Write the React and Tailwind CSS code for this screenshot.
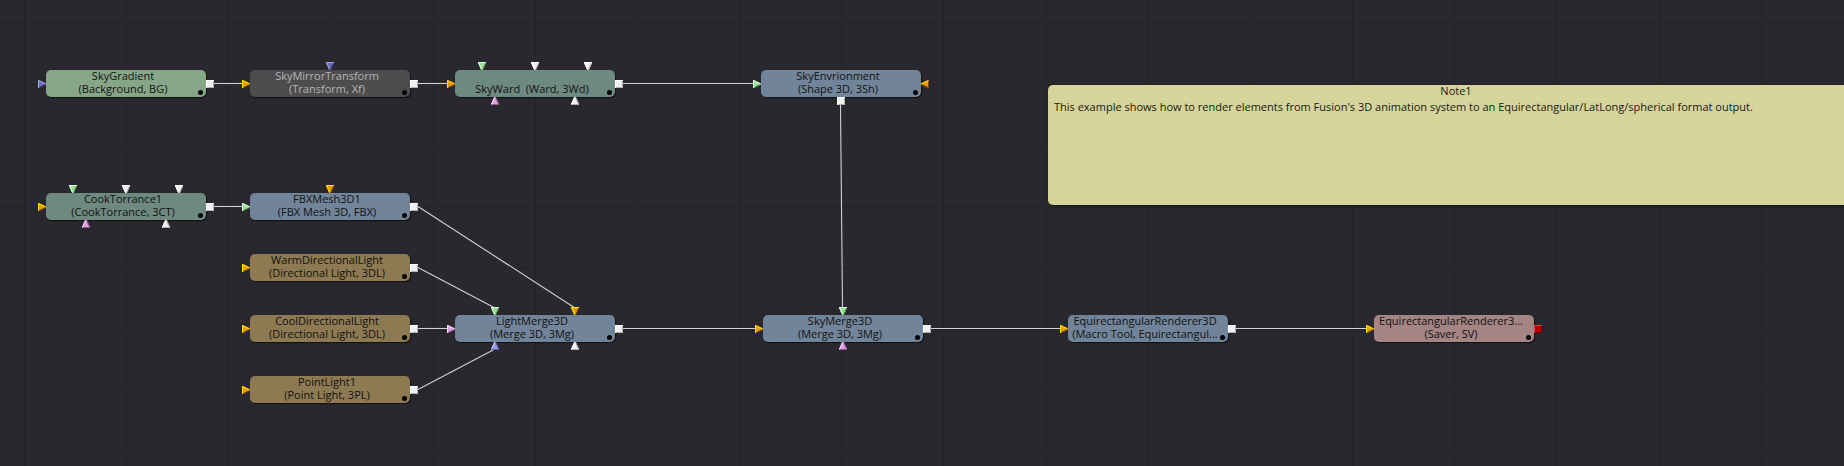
const PALETTE = {
  blue: ['#a3a3ec', '#6c6cb4', '#30307c'],
  amber: ['#ffe000', '#e6a000', '#7a4600'],
  green: ['#e0ffe0', '#98e098', '#4a8a4a'],
  white: ['#ffffff', '#f0f0f0', '#b0b0b0'],
  pink: ['#ffd8ff', '#e0a0e0', '#905890'],
  lilac: ['#c8c8ff', '#9c9ce0', '#5c5ca8'],
  red: ['#e84040', '#c00000', '#700000'],
};

const SHAPES = {
  right: { fill: '0,0 1,0 8,3.5 8,4.5 1,8 0,8', light: 'M0.5 8V0.5L7.5 3.8', dark: 'M1 7.6L8 4.3' },
  left: { fill: '8,0 7,0 0,3.5 0,4.5 7,8 8,8', light: 'M0 3.8L7.5 0.5', dark: 'M0.5 4.3L7.5 7.5V0.5' },
  down: { fill: '0,0 8,0 8,1 4.8,8 3.2,8 0,1', light: 'M0 0.5H8M0.5 0.5L3.5 7.5', dark: 'M7.6 1L4.5 8' },
  up: { fill: '3.2,0 4.8,0 8,7 8,8 0,8 0,7', light: 'M3.5 0.3L0.5 7.5', dark: 'M4.6 0.5L7.6 7.5H0' },
  square: { fill: '0,0 8,0 8,8 0,8', light: 'M0.5 8V0.5H8', dark: 'M0 7.5H7.5V0' },
};

const NODES = [
  { x: 46, y: 70, bg: 'bg-[#87a687]', name: 'SkyGradient', type: '(Background, BG)', ports: [[-8, 10, 'right', 'blue'], [160, 10, 'square', 'white']] },
  { x: 250, y: 70, bg: 'bg-[#4d4d4d]', text: 'text-[#b4b4b4]', name: 'SkyMirrorTransform', type: '(Transform, Xf)', ports: [[-8, 10, 'right', 'amber'], [76, -8, 'down', 'blue'], [160, 10, 'square', 'white']] },
  { x: 455, y: 70, bg: 'bg-[#6e8980]', name: '\u00a0', type: 'SkyWard  (Ward, 3Wd)', ports: [[-8, 10, 'right', 'amber'], [23, -8, 'down', 'green'], [76, -8, 'down', 'white'], [129, -8, 'down', 'white'], [36, 27, 'up', 'pink'], [116, 27, 'up', 'white'], [160, 10, 'square', 'white']] },
  { x: 761, y: 70, bg: 'bg-[#718499]', name: 'SkyEnvrionment', type: '(Shape 3D, 3Sh)', ports: [[-8, 10, 'right', 'green'], [160, 10, 'left', 'amber'], [76, 27, 'square', 'white']] },
  { x: 46, y: 193, bg: 'bg-[#6e8980]', name: 'CookTorrance1', type: '(CookTorrance, 3CT)', ports: [[-8, 10, 'right', 'amber'], [23, -8, 'down', 'green'], [76, -8, 'down', 'white'], [129, -8, 'down', 'white'], [36, 27, 'up', 'pink'], [116, 27, 'up', 'white'], [160, 10, 'square', 'white']] },
  { x: 250, y: 193, bg: 'bg-[#718499]', name: 'FBXMesh3D1', type: '(FBX Mesh 3D, FBX)', ports: [[-8, 10, 'right', 'green'], [76, -8, 'down', 'amber'], [160, 10, 'square', 'white']] },
  { x: 250, y: 254, bg: 'bg-[#8d7a52]', name: 'WarmDirectionalLight', type: '(Directional Light, 3DL)', ports: [[-8, 10, 'right', 'amber'], [160, 10, 'square', 'white']] },
  { x: 250, y: 315, bg: 'bg-[#8d7a52]', name: 'CoolDirectionalLight', type: '(Directional Light, 3DL)', ports: [[-8, 10, 'right', 'amber'], [160, 10, 'square', 'white']] },
  { x: 250, y: 376, bg: 'bg-[#8d7a52]', name: 'PointLight1', type: '(Point Light, 3PL)', ports: [[-8, 10, 'right', 'amber'], [160, 10, 'square', 'white']] },
  { x: 455, y: 315, bg: 'bg-[#718499]', name: 'LightMerge3D', type: '(Merge 3D, 3Mg)', ports: [[-8, 10, 'right', 'pink'], [36, -8, 'down', 'green'], [116, -8, 'down', 'amber'], [36, 27, 'up', 'lilac'], [116, 27, 'up', 'white'], [160, 10, 'square', 'white']] },
  { x: 763, y: 315, bg: 'bg-[#718499]', name: 'SkyMerge3D', type: '(Merge 3D, 3Mg)', ports: [[-8, 10, 'right', 'amber'], [76, -8, 'down', 'green'], [76, 27, 'up', 'pink'], [160, 10, 'square', 'white']] },
  { x: 1068, y: 315, bg: 'bg-[#718499]', name: 'EquirectangularRenderer3D', type: '(Macro Tool, Equirectangul...', ports: [[-8, 10, 'right', 'amber'], [160, 10, 'square', 'white']] },
  { x: 1374, y: 315, bg: 'bg-[#a58484]', name: 'EquirectangularRenderer3...', type: '(Saver, SV)', ports: [[-8, 10, 'right', 'amber'], [160, 10, 'square', 'red']] },
];

const WIRES = [
  [214, 83.5, 243, 83.5],
  [418, 83.5, 448, 83.5],
  [623, 83.5, 754, 83.5],
  [214, 206.5, 243, 206.5],
  [418, 206.5, 575, 308],
  [418, 267.5, 495, 308],
  [418, 328.5, 448, 328.5],
  [418, 389.5, 495, 349],
  [623, 328.5, 756, 328.5],
  [840.5, 105, 842.5, 308],
  [931, 328.5, 1061, 328.5],
  [1236, 328.5, 1367, 328.5],
];

const GRID_X = [24, 126, 228, 330, 433, 535, 637, 739, 841, 943, 1046, 1148, 1250, 1352, 1454, 1556, 1659, 1761];
const GRID_Y = [23, 84, 145, 207, 268, 329, 390, 452];

function Port({ port: [x, y, shape, color] }) {
  const [light, base, dark] = PALETTE[color];
  const s = SHAPES[shape];
  return (
    <svg className="absolute h-2 w-2" style={{ left: x, top: y }} viewBox="0 0 8 8" fill="none">
      <polygon points={s.fill} fill={base} />
      <path d={s.dark} stroke={dark} />
      <path d={s.light} stroke={light} />
    </svg>
  );
}

function Node({ node }) {
  return (
    <div className={`absolute h-[27px] w-40 ${node.text || 'text-[#111111]'}`} style={{ left: node.x, top: node.y }}>
      <div className={`flex h-full flex-col items-center justify-center rounded-[5px] pr-1.5 pb-[3px] leading-[13px] whitespace-pre shadow-[1px_1px_1px_#101012] ${node.bg}`}>
        <div>{node.name}</div>
        <div>{node.type}</div>
      </div>
      <span className="absolute left-[152px] top-5 h-[5px] w-[5px] rounded-full bg-black" />
      {node.ports.map((p, i) => <Port key={i} port={p} />)}
    </div>
  );
}

export default function App() {
  return (
    <main className="relative h-[466px] w-[1844px] overflow-hidden bg-[#28282e] font-['Open_Sans',sans-serif] text-[11px]">
      <svg className="absolute inset-0" width="1844" height="466" fill="none">
        <g stroke="#232327">
          {GRID_X.map((x) => <path key={x} d={`M${x + 0.5} 0V466`} />)}
          {GRID_Y.map((y) => <path key={y} d={`M0 ${y + 0.5}H1844`} />)}
        </g>
        <g stroke="#d2d2d2" strokeWidth="1.1">
          {WIRES.map(([a, b, c, d]) => <path key={`${a}-${b}`} d={`M${a} ${b}L${c} ${d}`} />)}
        </g>
      </svg>
      {NODES.map((n) => <Node key={`${n.x}-${n.y}`} node={n} />)}
      <section className="absolute left-[1048px] top-[85px] flex h-[120px] w-[816px] flex-col gap-0.5 rounded-[5px] bg-[#d5d49a] text-[#181818] shadow-[1px_1px_1px_#101012]">
        <h2 className="text-center leading-[11px]">Note1</h2>
        <p className="px-1.5 leading-[17px]">This example shows how to render elements from Fusion's 3D animation system to an Equirectangular/LatLong/spherical format output.</p>
      </section>
    </main>
  );
}
